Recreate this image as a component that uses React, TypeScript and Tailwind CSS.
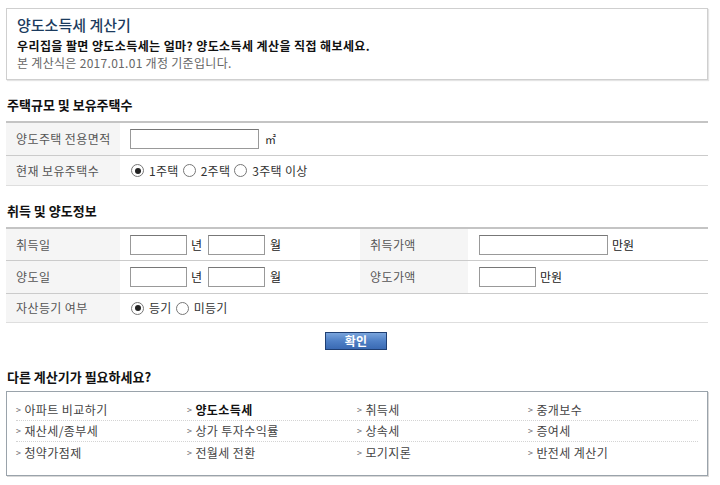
import React from "react";

const font = { fontFamily: '"Noto Sans CJK KR", "Noto Sans", sans-serif' };

function Radio({ checked, label }: { checked?: boolean; label: string }) {
  return (
    <span className="inline-flex items-center gap-[5px] mr-[4px]">
      <span className="w-[13px] h-[13px] rounded-full border border-[#777] bg-white flex items-center justify-center">
        {checked && <span className="w-[6px] h-[6px] rounded-full bg-[#222]" />}
      </span>
      <span className="text-[12px] text-[#333] tracking-[0.3px]">{label}</span>
    </span>
  );
}

function Box({ w }: { w: string }) {
  return <span className={`${w} h-[20px] border border-[#999] border-t-[#777] bg-white inline-block`} />;
}

function Label({ children, w = "w-[114px]" }: { children: React.ReactNode; w?: string }) {
  return (
    <div className={`${w} h-full bg-[#f5f5f5] pl-[10px] flex items-center text-[12px] text-[#555] tracking-[0.4px] shrink-0`}>
      {children}
    </div>
  );
}

const links = [
  ["아파트 비교하기", "양도소득세", "취득세", "중개보수"],
  ["재산세/종부세", "상가 투자수익률", "상속세", "증여세"],
  ["청약가점제", "전월세 전환", "모기지론", "반전세 계산기"],
];

export default function App() {
  return (
    <div className="w-[720px] h-[485px] bg-white overflow-hidden" style={font}>
      <div className="px-[6px] pt-[8px] w-[714px]">
        <div className="h-[72px] border border-[#cfcfcf] shadow-[1px_1px_1px_#e4e4e4] px-[10px] pt-[6px]">
          <div className="text-[15px] leading-[20px] text-[#1b3b5e] font-medium">양도소득세 계산기</div>
          <div className="text-[12px] leading-[17px] font-bold text-[#111] mt-[2px] tracking-[0.4px]">
            우리집을 팔면 양도소득세는 얼마? 양도소득세 계산을 직접 해보세요.
          </div>
          <div className="text-[12px] leading-[17px] text-[#666] tracking-[0.3px]">
            본 계산식은 2017.01.01 개정 기준입니다.
          </div>
        </div>

        <div className="mt-[16px] mb-[7px] pl-[1px] text-[13px] leading-[18px] font-bold text-[#111]">
          주택규모 및 보유주택수
        </div>
        <div className="border-t-2 border-[#c4c4c4]">
          <div className="h-[33px] border-b border-[#cbcbcb] flex items-center">
            <Label>양도주택 전용면적</Label>
            <div className="flex items-center pl-[10px] gap-[6px]">
              <Box w="w-[129px]" />
              <span className="text-[11px] text-[#222]">㎡</span>
            </div>
          </div>
          <div className="h-[30px] border-b border-[#dedede] flex items-center">
            <Label>현재 보유주택수</Label>
            <div className="flex items-center pl-[11px]">
              <Radio checked label="1주택" />
              <Radio label="2주택" />
              <Radio label="3주택 이상" />
            </div>
          </div>
        </div>

        <div className="mt-[16px] mb-[7px] pl-[1px] text-[13px] leading-[18px] font-bold text-[#111]">
          취득 및 양도정보
        </div>
        <div className="border-t-2 border-[#c4c4c4]">
          <div className="h-[32px] border-b border-[#cbcbcb] flex items-center">
            <div className="w-[354px] h-full flex items-center">
              <Label>취득일</Label>
              <div className="flex items-center pl-[10px] gap-[4px] text-[12px] text-[#222]">
                <Box w="w-[57px]" />
                <span className="mr-[2px]">년</span>
                <Box w="w-[57px]" />
                <span className="ml-[1px]">월</span>
              </div>
            </div>
            <div className="h-full flex items-center">
              <Label w="w-[108px]">취득가액</Label>
              <div className="flex items-center pl-[11px] gap-[4px] text-[12px] text-[#222]">
                <Box w="w-[129px]" />
                <span>만원</span>
              </div>
            </div>
          </div>
          <div className="h-[33px] border-b border-[#cbcbcb] flex items-center">
            <div className="w-[354px] h-full flex items-center">
              <Label>양도일</Label>
              <div className="flex items-center pl-[10px] gap-[4px] text-[12px] text-[#222]">
                <Box w="w-[57px]" />
                <span className="mr-[2px]">년</span>
                <Box w="w-[57px]" />
                <span className="ml-[1px]">월</span>
              </div>
            </div>
            <div className="h-full flex items-center">
              <Label w="w-[108px]">양도가액</Label>
              <div className="flex items-center pl-[11px] gap-[4px] text-[12px] text-[#222]">
                <Box w="w-[57px]" />
                <span>만원</span>
              </div>
            </div>
          </div>
          <div className="h-[29px] border-b border-[#dedede] flex items-center">
            <Label>자산등기 여부</Label>
            <div className="flex items-center pl-[11px]">
              <Radio checked label="등기" />
              <Radio label="미등기" />
            </div>
          </div>
        </div>

        <div className="flex justify-center mt-[9px] pr-[2px]">
          <button className="w-[62px] h-[18px] border border-[#1f3f73] bg-gradient-to-b from-[#7aa4dc] via-[#4f80c6] to-[#3a6ab3] text-white text-[12px] font-bold leading-none tracking-wide">
            확인
          </button>
        </div>

        <div className="mt-[18px] mb-[5px] pl-[1px] text-[13px] leading-[18px] font-bold text-[#111]">
          다른 계산기가 필요하세요?
        </div>
        <div className="h-[85px] border border-[#9aa3ab] shadow-[1px_1px_0_#d8d8d8] pt-[8px] px-[9px]">
          {links.map((row, i) => (
            <div
              key={i}
              className={`grid grid-cols-[171px_170px_171px_1fr] h-[21px] items-center ${
                i < 2 ? "border-b border-dotted border-[#d4d4d4]" : ""
              }`}
            >
              {row.map((t) => (
                <div key={t} className="flex items-center text-[12px] text-[#444] tracking-[0.4px]">
                  <span className="text-[9px] text-[#666] mr-[3px]">&gt;</span>
                  <span className={t === "양도소득세" ? "font-bold text-[#111]" : ""}>{t}</span>
                </div>
              ))}
            </div>
          ))}
        </div>
      </div>
    </div>
  );
}
